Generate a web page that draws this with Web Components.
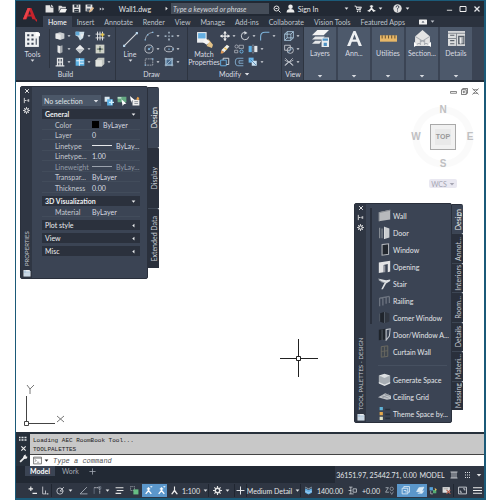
<!DOCTYPE html>
<html lang="en">
<head>
<meta charset="utf-8">
<title>Wall1.dwg</title>
<style>
  body { margin: 0; background: #fff; font: 7px/10px Lato, "Open Sans", sans-serif; color: #d9dce2; }
</style>
</head>
<body>
<cad-window></cad-window>
<script>
const ICONS = {
  down: '<path d="M2 5h12l-6 7z" fill="currentColor"/>',
  left: '<path d="M11 2v12L4 8z" fill="currentColor"/>',
  logo: '<path d="M1 13 6 1h4l5 12h-4l-1-3H6l-1 3zM7 8h2.500L8.200 4z" fill="#c8232c"/><path d="M6 1h3L4 13H1z" fill="#e8434a"/><path d="M13 13h3v3z" fill="#c8232c"/>',
  newfile: '<path d="M1 2h8l1 4h5v9H1z" fill="#e2e2e2"/><path d="M11 1l4 4h-4z" fill="#fff"/>',
  open: '<path d="M1 3h5l2 2h6v3H4l-2 5H1z" fill="#d8d8d8"/><path d="M5 9h11l-3 6H2z" fill="#f4f4f4"/>',
  save: '<path d="M1 1h14v14H1z" fill="#e4e4e4"/><path d="M4 1h8v5H4zM4 9h8v6H4z" fill="#27303b"/><path d="M8 2h3v3H8zM5 11h6v1H5z" fill="#e4e4e4"/>',
  saveas: '<path d="M1 1h12v12H1z" fill="#e4e4e4"/><path d="M4 1h6v4H4zM3 8h6v5H3z" fill="#59636f"/><path d="M7 15l1-4 6-6 2 3-6 6z" fill="#e3bd91"/>',
  more: '<path d="M2 4l5 4-5 4zM9 4l5 4-5 4z" fill="#cdd0d5"/>',
  right: '<path d="M5 2l7 6-7 6z" fill="#e4e4e4"/>',
  search: '<circle cx="7" cy="7" r="5" fill="none" stroke="#e4e4e4" stroke-width="2"/><path d="M11 11l4 4M5 7h4" stroke="#e4e4e4" stroke-width="2"/>',
  user: '<circle cx="8" cy="5" r="4" fill="#eee"/><path d="M1 15q0-6 7-6t7 6z" fill="#eee"/>',
  cart: '<path d="M1 2h3l2 8h8M4 4h11l-2 5H6" fill="#aab0b8" stroke="#e4e4e4" stroke-width="1.500"/><circle cx="7" cy="13" r="1.500" fill="#eee"/><circle cx="12" cy="13" r="1.500" fill="#eee"/>',
  adsk: '<path d="M8 2v7M8 8l-5 5M8 8l5 5" stroke="#eee" stroke-width="3"/><path d="M5 4h6M1 12h5M10 12h5" stroke="#eee" stroke-width="2"/>',
  help: '<circle cx="8" cy="8" r="7.500" fill="#e0e0e0"/><path d="M5.500 6q0-3 2.500-3t2.500 2.500Q10.500 7 8 8v2M8 11.500v2" fill="none" stroke="#303846" stroke-width="1.600"/>',
  min: '<path d="M2 12h12" stroke="#eee" stroke-width="2"/>',
  max: '<path d="M2 3h12v10H2z" fill="none" stroke="#eee" stroke-width="2"/>',
  close: '<path d="M3 3l10 10M13 3L3 13" stroke="currentColor" stroke-width="2.500"/>',
  pill: '<rect x="0" y="3" width="16" height="10" rx="1" fill="#f0f0f0"/><path d="M5 9h6L8 6z" fill="#3b4454"/>',
  tools: '<path d="M1 1h13v14H1z" fill="#eef0f2"/><path d="M3 3h2v2H3zM7 3h2v2H7zM3 7h2v2H3zM7 7h2v2H7zM3 11h2v2H3zM7 11h2v2H7zM11 7h1v6h-1z" fill="#3b4454"/><path d="M11 1l4 1v3h-4z" fill="#fff"/>',
  wall: '<path d="M1 4l7-2 7 2v8l-6 2-8-2z" fill="#c9cccf"/><path d="M1 4l8 2v8l-8-2z" fill="#e9eaeb"/>',
  door: '<path d="M4 2l4 1v12l-4-2z" fill="#e4e5e7"/><path d="M8 3l4-1v11l-4 2z" fill="#a7abb0"/>',
  window: '<path d="M3 1h10v12h2v2H1v-2h2z" fill="#e4e5e7"/><path d="M5 3h2v4H5zM9 3h2v4H9zM5 9h2v4H5zM9 9h2v4H9z" fill="#4a5361"/>',
  roof: '<path d="M1 1h14l-2 10-5 4-3-6-4-2z" fill="#cfe0ea"/><path d="M1 1h6v6H1z" fill="#5fa9d8"/><path d="M9 5h5l-3 6z" fill="#eee"/>',
  slab: '<path d="M8 1l7 7-7 7-7-7z" fill="#e9eaeb"/><path d="M1 8h14l-7 7z" fill="#bfc4c9"/>',
  space: '<path d="M1 2h14v12H1z" fill="#5db2e4"/><path d="M2 6h12M7 2v12M7 10h7" stroke="#e9f3fa" stroke-width="1.600"/>',
  grid: '<path d="M4 1v14M8 1v14M12 1v14M1 5h14M1 11h14" stroke="#e4e5e7" stroke-width="1.500"/><path d="M9 6h6M12 3v6" stroke="#e8c84c" stroke-width="2"/>',
  column: '<path d="M1 1h14v14H1z" fill="#cfd2c9"/><path d="M3 8h10M8 3v10" stroke="#7b8a70" stroke-width="2"/><circle cx="8" cy="8" r="2" fill="#3b4454"/>',
  box: '<path d="M1 5l4-4h10v10l-4 4H1z" fill="#c3c7c2"/><path d="M1 5h10v10H1z" fill="#e2e4df"/>',
  line: '<path d="M2 14L14 2" stroke="#d7dade"/><path d="M1 13h2v2H1zM13 1h2v2h-2z" fill="#b9d7ee"/>',
  arc: '<path d="M2 14Q3 4 14 2" fill="none" stroke="#cfd2d8"/><path d="M1 13h2v2H1zM13 1h2v2h-2zM5 5h2v2H5z" fill="#8cc4ee"/>',
  circle: '<circle cx="8" cy="8" r="6.500" fill="none" stroke="#cfd2d8" stroke-width="1.300"/><path d="M7 7h2v2H7zM9 7l4-3" fill="#8cc4ee" stroke="#8cc4ee"/>',
  rect: '<path d="M2 3h12v10H2z" fill="none" stroke="#cfd2d8" stroke-dasharray="3 1"/><path d="M1 12h2v2H1zM13 2h2v2h-2z" fill="#8cc4ee"/>',
  points: '<path d="M7 1h2v3H7zM7 12h2v3H7zM1 7h3v2H1zM12 7h3v2h-3zM7 7h2v2H7z" fill="#bfd2e2"/>',
  ellipse: '<ellipse cx="8" cy="8" rx="7" ry="4.500" fill="none" stroke="#cfd2d8" stroke-width="1.300"/><path d="M7 7h2v2H7zM13 7h2v2h-2z" fill="#8cc4ee"/>',
  hatch: '<path d="M3 3h10v10H3z" fill="#4a6c8d" stroke="#a4d2f2"/><path d="M1 3h14M1 13h14M3 1v14M13 1v14M5 11l6-6" stroke="#c8dceb"/>',
  match: '<path d="M1 1h9v10H1z" fill="#eceef0"/><path d="M2 2h7v5H2z" fill="#64aee0"/><path d="M9 8l2 4-1 2 5 2 1-3-4-5z" fill="#e2c288"/><path d="M6 10l3-3 4 3-3 3z" fill="#f5f5f5"/>',
  move: '<path d="M8 1v14M1 8h14" stroke="#eee" stroke-width="2"/><path d="M5 4l3-4 3 4zM5 12l3 4 3-4zM4 5L0 8l4 3zM12 5l4 3-4 3z" fill="#eee"/>',
  rotate: '<path d="M8 2A6 6 0 1 0 14 9" fill="none" stroke="#d5d9de" stroke-width="1.500"/><path d="M7 0l5 3-5 3z" fill="#d5d9de"/>',
  fillet: '<path d="M1 15V9q0-7 7-7h7" fill="none" stroke="#7fb5dc" stroke-width="1.700"/>',
  erase: '<path d="M2 10l9-9 4 3-8 9z" fill="#f0eee5"/><path d="M2 10l5 3-3 2H1z" fill="#e29c5a"/><path d="M7 6l4 3" stroke="#e8ba4d" stroke-width="2"/>',
  copy: '<circle cx="4" cy="4" r="2.500" fill="none" stroke="#cdd1d8"/><path d="M8 2h7v5H8zM1 10h5v4H1z" fill="none" stroke="#cdd1d8"/><circle cx="12" cy="12" r="2.500" fill="none" stroke="#6fb6e8" stroke-width="1.500"/>',
  mirror: '<path d="M1 3h5v10H1z" fill="#5eb0e6"/><path d="M10 3h5v10h-5z" fill="#e4e6e8"/><path d="M8 1v14" stroke="#e4e6e8" stroke-dasharray="2 1"/>',
  stretch: '<path d="M1 5h9v9H1z" fill="none" stroke="#64aee0" stroke-width="1.500"/><path d="M5 5V2h9v10h-4" fill="none" stroke="#d5d9de" stroke-width="1.500"/>',
  offset: '<path d="M15 2H6Q2 2 2 8t4 6h9M15 6H8v4h7" fill="none" stroke="#8ab9dc" stroke-width="1.300"/>',
  scale: '<path d="M1 1h8v8H1z" fill="#68b4e8"/><path d="M6 6h8v8H6z" fill="#c9e1f2"/><path d="M4 4l9 9" stroke="#2d6390"/>',
  cube: '<path d="M1 5l4-4h10v10l-4 4H1zM1 5h10v10M11 5l4-4M5 1v10h10M1 15l4-4" fill="none" stroke="#b9dbf2" stroke-width="1.200"/>',
  orbit: '<path d="M1 2h9v8H1z" fill="none" stroke="#cfd2d8" stroke-width="1.300"/><circle cx="10" cy="10" r="5" fill="none" stroke="#cfd2d8" stroke-width="1.300"/><path d="M6 14l8-8" stroke="#8cc4ee"/>',
  views: '<path d="M2 2l12 12M14 2L2 14M1 5l6 3-6 5M15 5l-6 3 6 5" fill="none" stroke="#cfd2d8" stroke-width="1.200"/>',
  layers: '<path d="M5 0h11l-5 5H0z" fill="#f3f3f3"/><path d="M3 6h9l-3 3H0zM3 10h6l-2 3H0z" fill="#e4e6e8"/><path d="M9 7h7v9H9z" fill="#e9edf0"/><path d="M10 8h5v2h-5zM11 12h3v3h-3z" fill="#4e92c4"/>',
  text: '<path d="M1 15L7 1h2l6 14h-3l-1.500-4H5.500L4 15zM6.300 9h3.400L8 4.300z" fill="#eef0f2"/>',
  ruler: '<path d="M0 5h16v6H0z" fill="#e7b768"/><path d="M2 5v3M5 5v3M8 5v3M11 5v3M14 5v3" stroke="#6d5633"/>',
  section: '<path d="M8 0l7 6v9H1V6z" fill="#e4e4e4"/><path d="M1 6l13 8M15 6L2 14M6 14v-4h4v4" stroke="#a9adb3" fill="none"/><path d="M0 11l3 3-3 2zM16 11l-3 3 3 2z" fill="#fff"/>',
  details: '<path d="M0 1h16v14H0z" fill="#dcdedf"/><path d="M0 3h16M8 3v12M0 8h8" stroke="#858b93"/><path d="M2 5h4M2 10h4M2 13h4M10 6h5v7h-5z" stroke="#575f69" fill="#a3a8ad"/><path d="M12 7v6" stroke="#fff"/>',
  dock: '<path d="M3 2v12M4 8h4M11 6v4M13 5v6" stroke="#e4e4e4" stroke-width="2"/>',
  gear: '<circle cx="8" cy="8" r="4" fill="none" stroke="#e4e4e4" stroke-width="2.500"/><path d="M8 0v4M8 12v4M0 8h4M12 8h4M2.500 2.500l2.500 2.500M11 11l2.500 2.500M13.500 2.500L11 5M5 11l-2.500 2.500" stroke="#e4e4e4" stroke-width="2"/>',
  palette: '<path d="M1 2h12l2 3v10H1z" fill="#e9ecef"/><path d="M4 2v13M8 7v8M12 7v8M1 6h14" stroke="#6f9cc4"/>',
  addsel: '<path d="M1 1h8v8H1z" fill="#d9e6ee"/><path d="M5 5h9v10H5z" fill="#5fb4e8"/><path d="M8 10h8M12 6v8" stroke="#cdf0ff" stroke-width="2"/>',
  picksel: '<path d="M1 1h14v9H1z" fill="#64a982"/><path d="M7 5l8 7-4 1-2 3z" fill="#fff"/><path d="M1 3h6" stroke="#d6ecdf" stroke-width="2"/>',
  quicksel: '<path d="M4 6h11v9H4z" fill="#eee"/><path d="M7 9h6M7 12h6" stroke="#5d6570"/><path d="M0 0l7 6-4 1-1 4z" fill="#fff"/><path d="M12 1l3 2-2 4-3-2z" fill="#e8a04a"/>',
  vmin: '<path d="M1 8h14v4H1z" fill="none" stroke="#777" stroke-width="2"/>',
  vmax: '<path d="M1 4h11v11H1zM4 4V1h11v11h-3M4 9h5M6.500 7v5" fill="none" stroke="#555" stroke-width="1.800"/>',
  vclose: '<path d="M1 1l14 14M15 1L1 15M2 4h12M2 12h12" stroke="#777" stroke-width="2"/>',
  twall: '<path d="M1 4l14-3v12L1 15z" fill="#b7b9bc"/><path d="M1 4l14-3v1L2 5v10H1z" fill="#8b8f95"/>',
  tdoor: '<path d="M2 2v13M5 3v12" stroke="#858b93" stroke-width="1.500"/><path d="M8 1l6 2v11l-6 2z" fill="#c9cccf"/><path d="M8 1v15" stroke="#eee"/>',
  twindow: '<path d="M5 2l8-1v13l-8 1z" fill="#22272e" stroke="#aeb2b7" stroke-width="1.300"/>',
  topening: '<path d="M1 3l14-2v13l-3 1V5L7 6v9l-6 1z" fill="#e3e4e5"/><path d="M7 6l2 1v8H7z" fill="#9297a0"/>',
  tstair: '<path d="M1 2l9 2 5-1v2l-5 3-4 7H4l4-8-7-3z" fill="#dfe1e3"/><path d="M1 2l3 4 5 1" fill="none" stroke="#9fa5ad"/>',
  trailing: '<path d="M2 5l12-2M2 5v10M6 4v10M10 4v8M14 3v8" stroke="#6d7480" stroke-width="1.600"/>',
  tcorner: '<path d="M2 3l6-2v14l-6-2z" fill="#20252d"/><path d="M8 1l6 2v10l-6 2z" fill="#303640"/><path d="M8 1v14M2 3v10" stroke="#59616d"/>',
  tassembly: '<path d="M1 2l8-1v13l-8 1z" fill="#1f242b"/><path d="M5 2v13" stroke="#5f6670"/><path d="M10 2l5-1-1 9-4 5z" fill="none" stroke="#c1c5ca" stroke-width="1.300"/>',
  tcurtain: '<path d="M4 2l8-1v13l-8 1z" fill="#414850" stroke="#6b6a62" stroke-width="1.200"/><path d="M8 2v12M4 8l8-1" stroke="#6b6a62"/>',
  tspace: '<path d="M1 3l7 2 7-2v9l-7 3-7-3z" fill="#a7adb3"/><path d="M1 3l7-2 7 2-7 3z" fill="#dde0e2"/><path d="M1 11l7 3 7-3v2l-7 3-7-3z" fill="#dfe2e4"/>',
  tceiling: '<path d="M0 9l9-5 7 3v4l-5 1z" fill="#c0c4c8"/><path d="M4 7l9 3M8 5l7 3M5 10l8-5" stroke="#8d939b"/>',
  ttheme: '<path d="M2 0h4v4H2z" fill="#5fb2d6"/><path d="M2 6h4v4H2z" fill="#e4a94b"/><path d="M2 12h4v4H2z" fill="#dfe1c4"/><path d="M9 3h6M9 9h6M9 14h6" stroke="#27303b" stroke-width="2"/>',
  grip: '<path d="M0 5h16M0 10h16" stroke="#dfe2e6" stroke-width="3" stroke-dasharray="2 1"/>',
  wrench: '<path d="M2 14l8-8" stroke="#eee" stroke-width="3"/><path d="M9 2l3-1v3l3 1-1 3-4 1-3-3z" fill="#eee"/>',
  prompt: '<path d="M1 2h14v12H1z" fill="#fff" stroke="#555" stroke-width="1.300"/><path d="M1 4h14" stroke="#555"/><path d="M3 6l3 2-3 2M7 11h4" fill="none" stroke="#555"/>',
  plus: '<path d="M8 1v14M1 8h14" stroke="currentColor" stroke-width="1.800"/>',
  snap: '<path d="M1 5h8M5 1v8M8 13h8" stroke="#eee" stroke-width="2"/>',
  ortho: '<path d="M3 1v13h7M8 8v6" fill="none" stroke="#cfd2d8" stroke-width="1.500"/><path d="M11 13h2v2h-2z" fill="#eee"/>',
  polar: '<circle cx="7" cy="9" r="5.500" fill="none" stroke="#cfd2d8" stroke-width="1.500"/><path d="M7 9l7-7M7 9h6" stroke="#cfd2d8" stroke-width="1.500"/>',
  iso: '<path d="M14 2L2 14h13" fill="none" stroke="#aeb5bf" stroke-width="1.500"/>',
  osnap: '<path d="M2 3h10v11" fill="none" stroke="#cfd2d8" stroke-width="1.500" stroke-dasharray="3 1"/><path d="M2 3v11M10 1h4v4h-4z" fill="none" stroke="#8793a2"/>',
  lwt: '<path d="M1 3h14M3 8h12M1 13h10" stroke="#e4e4e4" stroke-width="2"/>',
  trans: '<path d="M1 1h7v7H1z" fill="none" stroke="#cfd2d8" stroke-dasharray="2 1"/><path d="M6 6h9v9H6z" fill="#67be83"/>',
  annot: '<path d="M8 2v6L3 14M8 8l5 6M5 5h6" fill="none" stroke="#fff" stroke-width="2.400"/><path d="M11 1h4M13 0v3" stroke="#fff"/>',
  person: '<path d="M7 1h2v6l5 7-2 1-4-5-4 5-2-1 5-7z" fill="#eee"/>',
  bluecube: '<path d="M2 4l6 3 6-3v8l-6 3-6-3z" fill="#65b0e6"/><path d="M2 2l6 3 6-3M2 9l6 3 6-3" fill="none" stroke="#d6eaf7"/>',
  elev: '<path d="M2 2h6M2 14h8M5 2v12M9 5h6v6H9zM1 8h5" fill="none" stroke="#cfd2d8" stroke-width="1.400"/>',
  replace: '<path d="M1 3h5l-5 8h6" fill="none" stroke="#bcc2cb" stroke-width="1.300"/><circle cx="12" cy="5" r="3" fill="none" stroke="#bcc2cb"/><path d="M9 10l3 5 3-5" fill="none" stroke="#bcc2cb"/>',
  isolate: '<path d="M2 4h10v10H2zM5 4V1h10v10h-3M5 8h4v4" fill="none" stroke="#e7f2fb" stroke-width="1.400"/>',
  hardware: '<path d="M1 10l4-7 9-1-4 8zM3 13h8l3-5" fill="#d8ebf8" stroke="#f0f7fc"/>',
  colors: '<path d="M1 2h6v6H1z" fill="#56a1d8"/><path d="M7 7h6v6H7z" fill="#55ac73"/><path d="M10 3l4 3-3 3z" fill="#e4bd63"/><path d="M3 9v5h4" stroke="#eee" fill="none"/>',
  alert: '<path d="M1 2h13v10H1z" fill="#dedede"/><path d="M8 7l7 7M15 7l-7 7" stroke="#b35b4b" stroke-width="1.800"/><path d="M3 5h8" stroke="#777"/>',
  clean: '<path d="M1 2h14v12H1zM4 11V8M4 11h3M12 5H9M12 5v3" fill="none" stroke="#cfd2d8" stroke-width="1.600"/>',
  menu: '<path d="M0 3h16M0 8h16M0 13h16" stroke="#eee" stroke-width="1.800"/>',
  colgrid: '<path d="M1 2h14M1 14h14M4 2v12M8 2v12M12 2v12" stroke="#dfe2e6" stroke-width="1.600"/>',
  dots: '<path d="M2 3h12M2 8h12M2 13h12" stroke="#dfe2e6" stroke-width="2" stroke-dasharray="2 2"/>'
};

const BUTTON = `button { all: unset; box-sizing: border-box; cursor: default; }`;
const define = (name, css, html) => customElements.define(name, class extends HTMLElement {
  constructor() {
    super();
    const t = document.createElement('template');
    t.innerHTML = `<style>:host { display: block; box-sizing: border-box; } ${BUTTON} ${css}</style>` +
      (typeof html === 'function' ? '' : html);
    this.attachShadow({ mode: 'open' }).append(t.content.cloneNode(true));
  }
  connectedCallback() {
    if (typeof html !== 'function' || this.ready) return;
    this.ready = true;
    const t = document.createElement('template');
    t.innerHTML = html(this);
    this.shadowRoot.append(t.content.cloneNode(true));
  }
});
const attr = (e, n) => e.getAttribute(n) || '';
const ico = (n, size = 10) => `<ui-icon name="${n}" style="--size:${size}px"></ui-icon>`;

define('ui-icon', `:host { flex: none; width: var(--size, 10px); height: var(--size, 10px); } svg { display: block; width: 100%; height: 100%; }`,
  e => `<svg viewBox="0 0 16 16" aria-hidden="true">${ICONS[attr(e, 'name')]}</svg>`);

/* Cell of a bar: icon, label and drop-down arrow, each optional */
define('bar-button', `
  :host { min-width: 0; }
  button { width: 100%; height: 100%; display: flex; align-items: center; justify-content: center; gap: 3px; white-space: nowrap; }
  :host([on]) button { background: #5b97cb; }
  :host([sep]) button { border-left: 1px solid #202631; }`,
  e => `<button aria-label="${attr(e, 'label') || attr(e, 'icon')}">${attr(e, 'icon') ? ico(attr(e, 'icon'), attr(e, 'size') || 9) : ''}${e.hasAttribute('label') ? `<span>${attr(e, 'label')}</span>` : ''}${e.hasAttribute('menu') ? ico('down', 5) : ''}</button>`);

define('title-bar', `
  :host { display: grid; align-items: center; background: #222934; color: #e6e8eb;
    grid-template-columns: 13fr 13fr 14fr 12fr 13fr 54fr 9fr 98fr 16fr 10fr 26fr 20fr 10fr 14fr 12fr 7fr 6fr 14fr 6fr 32fr 14fr 14fr 14fr; }
  span { text-align: center; white-space: nowrap; min-width: 0; }
  input { width: 100%; min-width: 0; height: 11px; box-sizing: border-box; border: 0; padding: 0 2px; background: #454d59; color: #e1e3e6; font: italic 7px/10px Lato, sans-serif; }
  input::placeholder { color: #d6d9dd; opacity: 1; }`, `
  <bar-button icon="newfile"></bar-button><bar-button icon="open"></bar-button><bar-button icon="save"></bar-button><bar-button icon="saveas"></bar-button><bar-button icon="more" size="6"></bar-button>
  <span>Wall1.dwg</span><bar-button icon="right" size="5"></bar-button>
  <input type="search" aria-label="Search" placeholder="Type a keyword or phrase">
  <bar-button icon="search" size="8"></bar-button><bar-button icon="user"></bar-button><span>Sign In</span><i></i>
  <bar-button icon="down" size="5"></bar-button><bar-button icon="cart" size="8"></bar-button><bar-button icon="adsk"></bar-button><bar-button icon="down" size="5"></bar-button><i></i>
  <bar-button icon="help"></bar-button><bar-button icon="down" size="5"></bar-button><i></i>
  <bar-button icon="min" size="7"></bar-button><bar-button icon="max" size="8"></bar-button><bar-button icon="close" size="8"></bar-button>`);

define('ribbon-tabs', `
  :host { display: flex; align-items: stretch; background: #2b323e; color: #bfc4cb; }
  button { padding: 0 5px; line-height: 10px; white-space: nowrap; }
  .on { background: #3b4454; color: #fff; }
  bar-button { width: 20px; margin-left: 7px; }`,
  () => ['Home', 'Insert', 'Annotate', 'Render', 'View', 'Manage', 'Add-ins', 'Collaborate', 'Vision Tools', 'Featured Apps']
    .map((t, i) => `<button role="tab"${i ? '' : ' class="on"'}>${t}</button>`).join('') + `<bar-button icon="pill" size="8" menu></bar-button>`);

define('ribbon-tool', `
  :host { flex: none; }
  button { display: flex; align-items: center; gap: 2px; height: 13px; width: 20px; }
  :host([plain]) button { width: 14px; }`,
  e => `<button aria-label="${attr(e, 'icon')}">${ico(attr(e, 'icon'), 10)}${e.hasAttribute('plain') ? '' : ico('down', 4)}</button>`);

define('ribbon-large', `
  :host { flex: none; }
  button { display: flex; flex-direction: column; align-items: center; width: 100%; padding-top: 2px; text-align: center; line-height: 8px; }
  span { margin-top: 2px; } ui-icon { flex: none; }`,
  e => `<button>${ico(attr(e, 'icon'), 17)}<span>${attr(e, 'label').replace('|', '<br>')}</span>${e.hasAttribute('menu') ? ico('down', 5) : ''}</button>`);

define('ribbon-panel', `
  :host { display: grid; grid-template-rows: 1fr 12px; border-right: 1px solid #2d3440; min-width: 0; }
  .body { display: flex; padding-top: 2px; }
  footer { display: flex; align-items: center; justify-content: center; gap: 3px; line-height: 10px; }`,
  e => `<div class="body"><slot></slot></div><footer>${attr(e, 'label')}${e.hasAttribute('menu') ? ico('down', 6) : ''}</footer>`);

define('ribbon-collapsed', `
  :host { padding-right: 2px; min-width: 0; }
  button { width: 100%; height: 53px; background: #4d596b; display: flex; flex-direction: column; align-items: center; padding: 3px 0 1px; white-space: nowrap; }
  span { flex: 1; margin-top: 2px; line-height: 8px; }`,
  e => `<button>${ico(attr(e, 'icon'), 17)}<span>${attr(e, 'label')}</span>${ico('down', 6)}</button>`);

define('ribbon-bar', `
  :host { display: grid; grid-template-columns: 100fr 72fr 94fr 22fr repeat(5, 34fr) 10fr; background: #3b4454; border-bottom: 2px solid #252c37; height: 55px; }
  ribbon-panel, ribbon-collapsed { min-width: 0; }
  .w33 { width: 34px; border-right: 1px solid #2d3440; margin-right: 5px; } .w26 { width: 28px; } .w30 { width: 32px; }
  .rows { display: grid; grid-auto-rows: 13px; } .rows > div { display: flex; } .v { padding-left: 2px; }`,
  () => {
    const rows = (...r) => `<div class="rows">${r.map(x => `<div>${x.map(n => `<ribbon-tool icon="${n.replace('*', '')}"${n.endsWith('*') ? ' plain' : ''}></ribbon-tool>`).join('')}</div>`).join('')}</div>`;
    return `
    <ribbon-panel label="Build"><ribbon-large class="w33" icon="tools" label="Tools" menu></ribbon-large>${rows(['wall', 'roof', 'grid'], ['door', 'slab', 'column*'], ['window', 'space', 'box'])}</ribbon-panel>
    <ribbon-panel label="Draw"><ribbon-large class="w26" icon="line" label="Line" menu></ribbon-large>${rows(['arc', 'points'], ['circle', 'ellipse'], ['rect', 'hatch'])}</ribbon-panel>
    <ribbon-panel label="Modify" menu><ribbon-large class="w30" icon="match" label="Match|Properties"></ribbon-large>${rows(['move', 'rotate', 'fillet'], ['erase*', 'copy*', 'mirror'], ['stretch*', 'offset*', 'scale'])}</ribbon-panel>
    <ribbon-panel label="View"><div class="v">${rows(['cube'], ['orbit'], ['views'])}</div></ribbon-panel>` +
    [['layers', 'Layers'], ['text', 'Ann...'], ['ruler', 'Utilities'], ['section', 'Section...'], ['details', 'Details']]
      .map(([i, l]) => `<ribbon-collapsed icon="${i}" label="${l}"></ribbon-collapsed>`).join('');
  });

define('app-header', `
  :host { display: grid; grid-template-columns: 27fr 441fr; grid-template-rows: 15px 11px; background: #222934; }
  .logo { grid-row: span 2; display: grid; place-items: center; }
  title-bar, ribbon-tabs { min-width: 0; }`,
  `<button class="logo" aria-label="Application menu">${ico('logo', 15)}</button><title-bar></title-bar><ribbon-tabs></ribbon-tabs>`);

/* Floating palette: caption strip, body slot and a column of rotated tabs */
define('tool-window', `
  :host { display: flex; align-items: flex-start; }
  .frame { flex: 1; min-width: 0; height: 100%; box-sizing: border-box; display: grid; grid-template-columns: 11px 1fr; background: #3b4454; border: 1px solid #2a303c; border-radius: 2px; overflow: hidden; }
  .strip { background: #2f3643; display: flex; flex-direction: column; align-items: center; gap: 3px; padding: 1px 0; color: #eee; }
  .strip b { flex: 1; font-weight: 400; font-size: 6px; color: #c3c8cf; text-align: left; }
  .vert { writing-mode: vertical-rl; transform: rotate(180deg); white-space: nowrap; line-height: 10px; }
  .tabs { flex: none; width: 11px; height: calc(100% - var(--tab-gap)); margin-top: 1px; display: grid; grid-auto-rows: 1fr; }
  .tabs button { background: #2a303c; color: #c9cdd4; display: grid; place-items: center; min-height: 0; border-top: 1px solid #3d4654; border-radius: 0 2px 0 0; }
  .tabs .on { background: #3b4454; color: #eee; border-color: #2a303c; }`,
  e => `<section class="frame"><div class="strip">
      <bar-button icon="close" size="6"></bar-button><bar-button icon="dock" size="7"></bar-button><bar-button icon="gear" size="7"></bar-button>
      <b class="vert">${attr(e, 'label')}</b>${ico('palette', 8)}</div><slot></slot></section>
    <div class="tabs">${attr(e, 'tabs').split(',').map((t, i) => `<button role="tab"${i ? '' : ' class="on"'}><span class="vert">${t}</span></button>`).join('')}</div>`);

define('property-group', `
  button { display: flex; width: 100%; height: 10px; align-items: center; justify-content: space-between; padding: 0 4px 0 3px; background: #2b313d; color: #eceef0; font-weight: var(--weight, 400); }
  :host([open]) { --weight: 700; }`,
  e => `<button aria-expanded="${e.hasAttribute('open')}">${attr(e, 'label')}${ico(e.hasAttribute('open') ? 'down' : 'left', 5)}</button><slot></slot>`);

define('property-table', `
  table { border-collapse: collapse; width: 100%; table-layout: fixed; line-height: 10px; padding: 0; }
  tr:nth-child(odd) { height: 11px; } tr:nth-child(even) { height: 10px; }
  th, td { padding: 0; font-weight: 400; text-align: left; white-space: nowrap; box-shadow: inset 0 -1px #424c5b; }
  th { width: 37px; padding-left: 13px; color: #c6cad1; } .dim { color: #949ca8; }
  td > div { display: flex; align-items: center; gap: 4px; }
  .sw { width: 7px; height: 7px; background: #000; } .ln { width: 20px; height: 1px; background: #e6e8eb; } .dim .ln { background: #9ba2ad; }`,
  e => `<table>${attr(e, 'rows').split(';').map(r => r.split(':')).map(([k, v, x]) =>
    `<tr${k === 'Lineweight' ? ' class="dim"' : ''}><th scope="row"${k === 'Lineweight' ? ' class="dim"' : ''}>${k}</th><td><div>${x ? `<i class="${x}"></i>` : ''}${v}</div></td></tr>`).join('')}</table>`);

define('properties-palette', `
  :host { --tab-gap: 12px; }
  tool-window { height: 193px; }
  .body { padding: 8px 7px 0 10px; min-width: 0; }
  .top { display: flex; align-items: center; gap: 3px; margin-bottom: 3px; }
  .pick { position: relative; flex: 1; min-width: 0; }
  .pick ui-icon { position: absolute; right: 2px; top: 3px; pointer-events: none; }
  select { appearance: none; display: block; width: 100%; height: 11px; border: 0; border-radius: 0; padding: 0 2px; background: #4b5768; color: #dfe2e6; font: 7px/10px Lato, sans-serif; }
  property-group { margin-bottom: 3px; }`, `
  <tool-window label="PROPERTIES" tabs="Design,Display,Extended Data"><div class="body">
    <div class="top"><div class="pick"><select aria-label="Selection"><option>No selection</option></select>${ico('down', 6)}</div>${ico('addsel', 10)}${ico('picksel', 10)}${ico('quicksel', 10)}</div>
    <property-group open label="General"><property-table rows="Color:ByLayer:sw;Layer:0;Linetype:ByLay...:ln;Linetype...:1.00;Lineweight:ByLay...:ln;Transpar...:ByLayer;Thickness:0.00"></property-table></property-group>
    <property-group open label="3D Visualization"><property-table rows="Material:ByLayer"></property-table></property-group>
    <property-group label="Plot style"></property-group><property-group label="View"></property-group><property-group label="Misc"></property-group>
  </div></tool-window>`);

define('palette-item', `button { display: flex; align-items: center; gap: 2px; height: 17px; width: 100%; white-space: nowrap; color: #e4e6e9; }`,
  e => `<button>${ico(attr(e, 'icon'), 13)}<slot></slot></button>`);

define('design-palette', `
  :host { --tab-gap: 14px; }
  tool-window { height: 220px; }
  .body { padding: 3px 0 0 12px; min-width: 0; position: relative; overflow: hidden; }
  .bar { position: absolute; left: 4px; top: 4px; width: 2px; height: 116px; background: #2a303c; }
  hr { border: 0; border-top: 1px solid #465060; margin: 5px 4px 5px 0; }`,
  () => {
    const items = l => l.map(([i, t]) => `<palette-item icon="t${i}">${t}</palette-item>`).join('');
    return `<tool-window label="TOOL PALETTES - DESIGN" tabs="Design,Annot...,Interiors,Room...,Details,Materi...,Massing"><div class="body"><i class="bar"></i>
      ${items([['wall', 'Wall'], ['door', 'Door'], ['window', 'Window'], ['opening', 'Opening'], ['stair', 'Stair'], ['railing', 'Railing'], ['corner', 'Corner Window'], ['assembly', 'Door/Window A...'], ['curtain', 'Curtain Wall']])}<hr>
      ${items([['space', 'Generate Space'], ['ceiling', 'Ceiling Grid'], ['theme', 'Theme Space by...']])}</div></tool-window>`;
  });

define('view-cube', `
  :host { width: 66px; display: grid; justify-items: center; gap: 9px; color: #c0c0c2; }
  .ring { width: 66px; height: 66px; display: grid; grid-template: 12px 42px 12px / 12px 42px 12px; place-items: center; border-radius: 50%;
    background: radial-gradient(circle, transparent 23px, #fafafa 24px, #fafafa 30px, transparent 31px); font: 700 10px/12px "Liberation Sans", sans-serif; }
  .n, .s { grid-column: 2; } .w { grid-column: 1; grid-row: 2; } .e { grid-column: 3; grid-row: 2; }
  .top { grid-area: 2 / 2; width: 26px; height: 26px; border: 1px solid #a9a9a9; background: #e9e9e9; box-shadow: inset 0 0 0 4px #f1f1f1; text-align: center; font: 700 7px/10px "Liberation Sans", sans-serif; color: #999; }
  .wcs { background: #e9e8f1; border-radius: 2px; padding: 0 2px; display: flex; align-items: center; gap: 2px; height: 9px; color: #a5a5b2; }`, `
  <div class="ring"><span class="n">N</span><span class="w">W</span><button class="top">TOP</button><span class="e">E</span><span class="s">S</span></div>
  <button class="wcs">WCS ${ico('down', 6)}</button>`);

define('drawing-area', `
  :host { position: relative; background: #fff; min-height: 0; overflow: hidden; }
  properties-palette { position: absolute; left: 4px; top: 4px; width: 139px; }
  design-palette { position: absolute; right: 21px; top: 121px; width: 109px; }
  view-cube { position: absolute; right: 8px; top: 22px; }
  nav { position: absolute; right: 5px; top: 6px; display: flex; gap: 4px; }
  .cross { position: absolute; left: 264px; top: 257px; width: 38px; height: 38px; }
  .ucs { position: absolute; left: 6px; bottom: 5px; width: 48px; height: 48px; }`, `
  <nav>${ico('vmin', 7)}${ico('vmax', 7)}${ico('vclose', 7)}</nav>
  <view-cube></view-cube>
  <svg class="cross" viewBox="0 0 38 38"><path d="M18.500 0v17M18.500 21v17M0 19.500h16M21 19.500h17" stroke="#222"/><path d="M16.500 17.500h4v4h-4z" fill="#fff" stroke="#222"/></svg>
  <svg class="ucs" viewBox="0 0 48 48"><path d="M4.500 42V17M6 44.500h27M2.500 42.500h4v4h-4z" fill="none" stroke="#444"/><path d="M5 6l3 4 4-4M8 10v5M35 37l7 6M42 37l-7 6" fill="none" stroke="#777"/></svg>
  <properties-palette></properties-palette><design-palette></design-palette>`);

define('command-window', `
  :host { display: grid; grid-template-columns: 14px 1fr; border-top: 2px solid #27303b; background: #27303b; color: #222; }
  .side { display: flex; flex-direction: column; align-items: center; gap: 2px; color: #eee; padding-top: 1px; }
  .log { background: #c8c8c8; border-bottom: 1px solid #444; padding: 2px 3px 0; font: 6px/9px "Liberation Mono", monospace; }
  p { margin: 0; }
  label { display: flex; align-items: center; gap: 2px; background: #fff; height: 11px; padding-left: 3px; }
  input { flex: 1; min-width: 0; border: 0; padding: 0 2px; height: 10px; background: none; font: italic 7px/10px "Liberation Mono", monospace; }
  input::placeholder { color: #555; opacity: 1; }`, `
  <div class="side">${ico('grip', 8)}${ico('close', 7)}${ico('wrench', 9)}</div>
  <div><div class="log"><p>Loading AEC RoomBook Tool...</p><p>TOOLPALETTES</p></div>
  <label>${ico('prompt', 9)}${ico('down', 5)}<input aria-label="Command" placeholder="Type a command"></label></div>`);

define('layout-bar', `
  :host { display: grid; grid-template-columns: 319fr 149fr; height: 17px; background: #222934; }
  .tabs { display: flex; align-items: flex-start; padding-left: 9px; color: #a5abb5; }
  .tabs button { padding: 0 5px; line-height: 10px; } .tabs button:nth-child(2) { margin: 0 2px; }
  .tabs .on { background: #3b4454; color: #fff; font-weight: 700; } .tabs bar-button { width: 14px; height: 11px; }
  .info { display: grid; grid-template-columns: 83fr 28fr 15fr 13fr 10fr; background: #2f3643; min-width: 0; color: #e4e6e9; }`, `
  <div class="tabs"><button class="on">Model</button><button>Work</button><bar-button icon="plus" size="7"></bar-button></div>
  <div class="info"><bar-button label="36151.97, 25442.71, 0.00"></bar-button><bar-button label="MODEL"></bar-button><bar-button icon="colgrid" size="8"></bar-button><bar-button icon="dots" size="8"></bar-button><bar-button icon="down" size="6"></bar-button></div>`);

define('status-bar', `
  :host { display: grid; height: 15px; background: #2f3643; color: #e4e6e9;
    grid-template-columns: 10fr 13fr 12fr 26fr 13fr 22fr 15fr 15fr 13fr 12fr 15fr 26fr 26fr 12fr 54fr 15fr 30fr 15fr 22fr 15fr 16fr 14fr 13fr 13fr 17fr 14fr; }
  bar-button { padding: 1px 0; }`, `<i></i>
  <bar-button icon="snap"></bar-button><bar-button icon="ortho"></bar-button><bar-button sep icon="polar" menu></bar-button><bar-button icon="iso"></bar-button><bar-button icon="osnap" menu></bar-button><bar-button icon="lwt"></bar-button><bar-button icon="trans"></bar-button>
  <bar-button on icon="annot"></bar-button><bar-button on icon="annot"></bar-button><bar-button icon="person"></bar-button><bar-button label="1:100" menu></bar-button><bar-button sep icon="gear" menu></bar-button><bar-button sep icon="plus"></bar-button>
  <bar-button sep label="Medium Detail" menu></bar-button><bar-button sep icon="bluecube"></bar-button><bar-button label="1400.00"></bar-button><bar-button icon="elev"></bar-button><bar-button label="+0.00"></bar-button><bar-button icon="replace"></bar-button>
  <bar-button on icon="isolate"></bar-button><bar-button on icon="hardware"></bar-button><bar-button icon="colors"></bar-button><bar-button icon="alert"></bar-button><bar-button sep icon="clean"></bar-button><bar-button icon="menu"></bar-button>`);

define('cad-window', `
  :host { display: grid; grid-template-columns: minmax(0, 1fr); grid-template-rows: auto auto 1fr auto auto auto; height: 100vh; margin: 0 14px 0 15px; border: solid #1b5a78; border-width: 1px 2px 2px 1px; }`,
  `<app-header></app-header><ribbon-bar></ribbon-bar><drawing-area></drawing-area><command-window></command-window><layout-bar></layout-bar><status-bar></status-bar>`);
</script>
</body>
</html>
